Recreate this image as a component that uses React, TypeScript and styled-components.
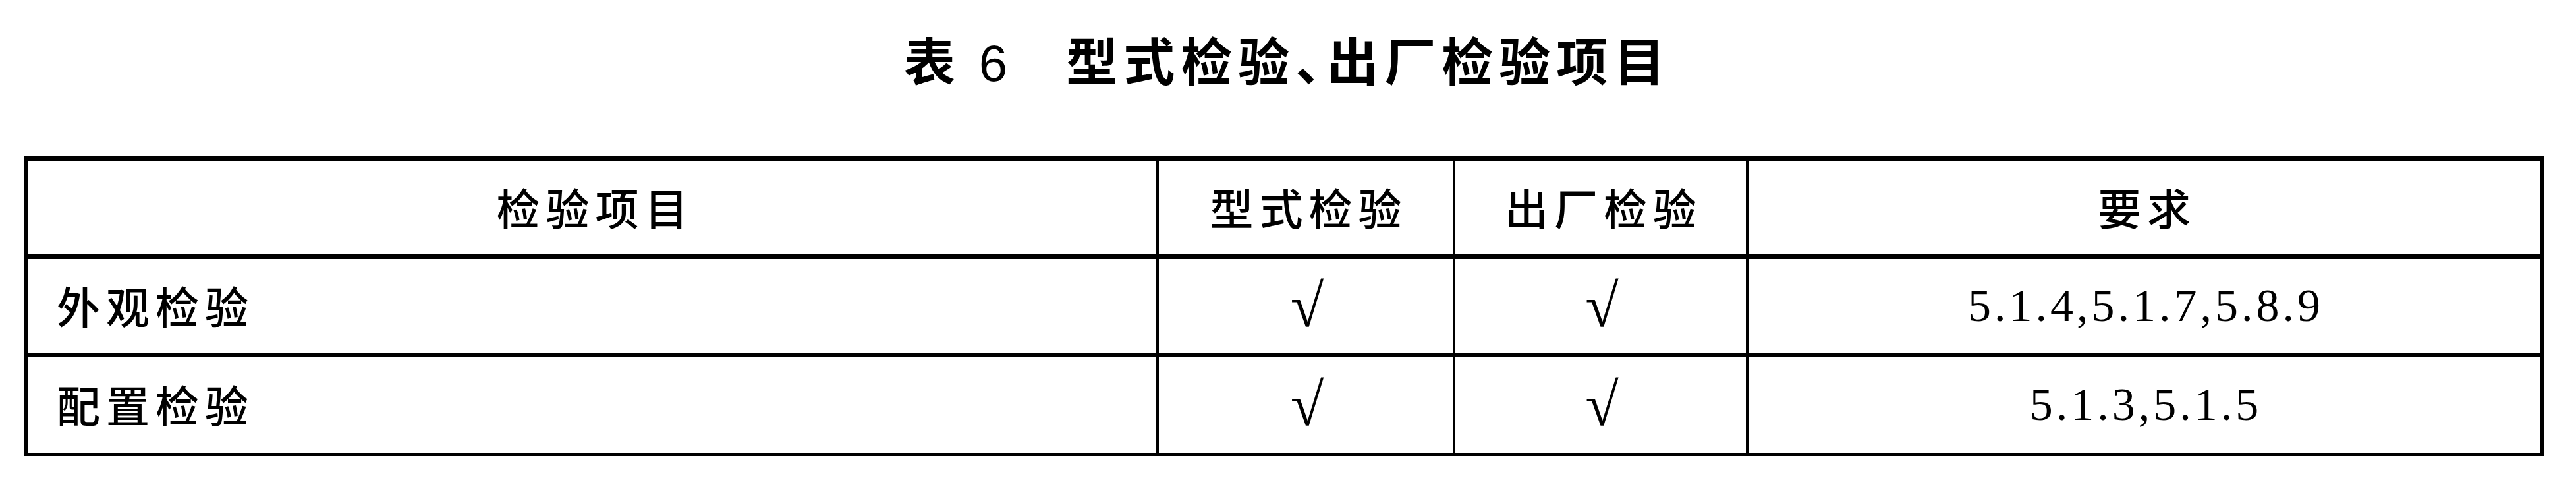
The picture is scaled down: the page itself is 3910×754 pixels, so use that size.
import React from 'react';
import styled, { createGlobalStyle } from 'styled-components';

const GlobalStyle = createGlobalStyle`
  html, body {
    margin: 0;
    padding: 0;
    background: #fff;
  }
  body {
    color: #000;
    font-family: "Noto Sans CJK SC", sans-serif;
  }
`;

const Page = styled.div`
  width: 3910px;
  height: 754px;
  box-sizing: border-box;
  padding: 50px 48px 0 37px;
  display: flex;
  flex-direction: column;
  gap: 109px;
`;

const Caption = styled.div`
  display: flex;
  justify-content: center;
  align-items: baseline;
  height: 78px;
  font-family: "Noto Sans CJK SC", sans-serif;
  font-weight: 700;
  font-size: 78px;
  line-height: 78px;
`;

const CaptionNumber = styled.span`
  font-family: "Liberation Sans", Arial, sans-serif;
  font-weight: 400;
  margin: 0 89px 0 36px;
`;

const CaptionText = styled.span`
  letter-spacing: 9px;
  margin-right: -9px;
  font-feature-settings: "halt";
`;

const Frame = styled.div`
  border-style: solid;
  border-color: #000;
  border-width: 8px 7px 5px 6px;
  display: flex;
  flex-direction: column;
`;

const Row = styled.div<{ $height: number; $rule: number }>`
  display: grid;
  grid-template-columns: 1712px 450px 445px 1fr;
  height: ${p => p.$height}px;
  border-bottom: ${p => p.$rule}px solid #000;
`;

const Cell = styled.div<{ $left?: boolean }>`
  box-sizing: border-box;
  display: flex;
  align-items: center;
  justify-content: ${p => (p.$left ? 'flex-start' : 'center')};
  padding-left: ${p => (p.$left ? '43px' : '0')};
  border-left: 4px solid #000;

  &:first-child {
    border-left: none;
  }
`;

const Label = styled.span`
  font-family: "Noto Sans CJK SC", sans-serif;
  font-weight: 500;
  font-size: 66px;
  line-height: 1;
  letter-spacing: 9px;
  margin-right: -9px;
  padding-bottom: 4px;
`;

const Clause = styled.span`
  font-family: "Liberation Serif", "Times New Roman", serif;
  font-size: 70px;
  line-height: 1;
  letter-spacing: 5px;
  margin-right: -5px;
`;

const Tick = styled.span`
  font-family: "Liberation Serif", "Times New Roman", serif;
  font-size: 92px;
  line-height: 1;
  padding-left: 4px;
`;

const rows = [
  { item: '外观检验', type: true, factory: true, req: '5.1.4,5.1.7,5.8.9', height: 142, rule: 6 },
  { item: '配置检验', type: true, factory: true, req: '5.1.3,5.1.5', height: 146, rule: 0 },
];

export default function App() {
  return (
    <>
      <GlobalStyle />
      <Page>
        <Caption>
          <span>表</span>
          <CaptionNumber>6</CaptionNumber>
          <CaptionText>型式检验、出厂检验项目</CaptionText>
        </Caption>
        <Frame>
          <Row $height={140} $rule={8}>
            <Cell><Label>检验项目</Label></Cell>
            <Cell><Label>型式检验</Label></Cell>
            <Cell><Label>出厂检验</Label></Cell>
            <Cell><Label>要求</Label></Cell>
          </Row>
          {rows.map(r => (
            <Row key={r.item} $height={r.height} $rule={r.rule}>
              <Cell $left><Label>{r.item}</Label></Cell>
              <Cell>{r.type && <Tick>√</Tick>}</Cell>
              <Cell>{r.factory && <Tick>√</Tick>}</Cell>
              <Cell><Clause>{r.req}</Clause></Cell>
            </Row>
          ))}
        </Frame>
      </Page>
    </>
  );
}
